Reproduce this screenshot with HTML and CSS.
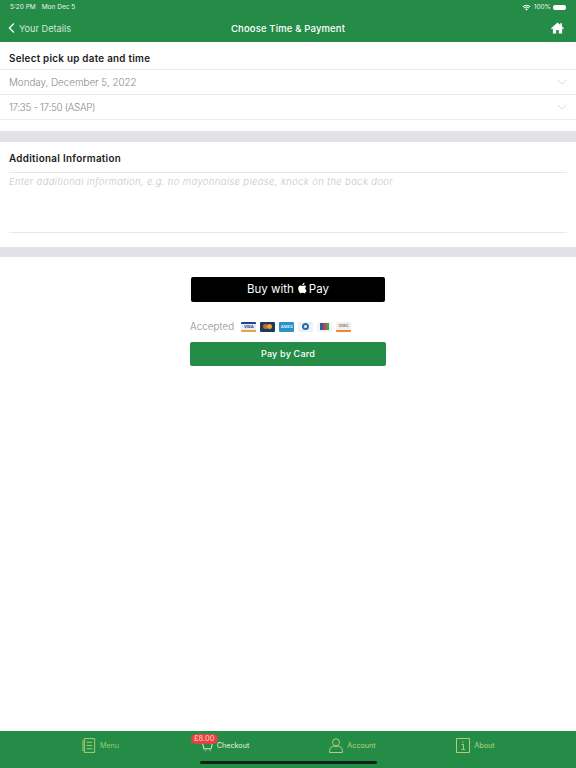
FILE: index.html
```html
<!DOCTYPE html>
<html lang="en">
<head>
  <meta charset="UTF-8">
  <meta name="viewport" content="width=device-width, initial-scale=1.0">
  <title>Choose Time &amp; Payment</title>
  <link rel="stylesheet" href="styles.css">
</head>
<body>
  <div class="page">
    <header>
      <div class="status">
        <div class="status-left"><span>5:20 PM</span><span>Mon Dec 5</span></div>
        <div class="status-right">
          <svg class="wifi" viewBox="0 0 16 12"><path d="M8 11.5 5.6 8.9a3.4 3.4 0 0 1 4.8 0zM4.5 7.8 3.2 6.4a6.8 6.8 0 0 1 9.6 0l-1.3 1.4a5 5 0 0 0-7 0zM2.2 5.4.8 4a10.2 10.2 0 0 1 14.4 0l-1.4 1.4a8.3 8.3 0 0 0-11.6 0z"/></svg>
          <span>100%</span>
          <span class="battery"></span>
        </div>
      </div>
      <nav class="navbar">
        <div class="back">
          <svg viewBox="0 0 9 14"><path d="M7.5 1.2 1.8 7l5.7 5.8"/></svg>
          <span>Your Details</span>
        </div>
        <div class="title">Choose Time &amp; Payment</div>
        <svg class="home" viewBox="0 0 14 13"><path d="M7 .6 0 6.9l.8.9 1.2-1v5.6h3.6V8.6h2.800v3.800H12V6.800l1.200 1 .8-.9-2.200-2V1.400h-1.800v1.900z"/></svg>
      </nav>
    </header>

    <section class="pickup">
      <h3 class="pickup-title">Select pick up date and time</h3>
      <div class="select"><span>Monday, December 5, 2022</span><svg viewBox="0 0 12 7"><path d="M1 1l5 5 5-5"/></svg></div>
      <div class="select"><span class="select-time">17:35 - 17:50 (ASAP)</span><svg viewBox="0 0 12 7"><path d="M1 1l5 5 5-5"/></svg></div>
    </section>
    <div class="band"></div>

    <section class="info">
      <h3 class="info-title">Additional Information</h3>
      <div class="textarea">Enter additional information, e.g. no mayonnaise please, knock on the back door</div>
    </section>
    <div class="band band-2"></div>

    <section class="pay">
      <button class="apple-pay">
        <span>Buy with</span>
        <svg viewBox="0 0 14 17"><path d="M11.600 9c0-1.800 1.500-2.700 1.600-2.700-.9-1.300-2.200-1.500-2.700-1.500-1.100-.1-2.200.7-2.800.7s-1.500-.7-2.400-.7C4 4.800 2.800 5.500 2.200 6.600.9 8.900 1.900 12.200 3.100 14c.6.900 1.300 1.900 2.300 1.800.9 0 1.300-.6 2.400-.6s1.400.6 2.400.6 1.600-.9 2.200-1.800c.7-1 1-2 1-2.100-.1 0-1.800-.7-1.800-2.900zM9.800 3.600c.5-.6.800-1.500.7-2.400-.8 0-1.700.5-2.300 1.200-.5.6-.9 1.500-.8 2.300.9.100 1.800-.4 2.400-1.100z"/></svg>
        <span>Pay</span>
      </button>
      <div class="accepted">
        <span class="accepted-label">Accepted</span>
        <div class="cards">
          <span class="card card-visa">VISA</span>
          <span class="card card-master"><i></i><i></i></span>
          <span class="card card-amex">AMEX</span>
          <span class="card card-diners"><i></i></span>
          <span class="card card-jcb"><i></i><i></i><i></i></span>
          <span class="card card-discover">DISC</span>
        </div>
      </div>
      <button class="pay-card">Pay by Card</button>
    </section>

    <footer class="tabbar">
      <div class="tab tab-dim">
        <svg class="ico-menu" viewBox="0 0 14 16"><path d="M2 .6h11v14.800H2zM.6 2v12M4.500 4.500h6M4.500 8h6M4.500 11.500h6"/></svg>
        <span>Menu</span>
      </div>
      <div class="tab tab-active">
        <span class="badge">£8.00</span>
        <svg class="ico-cart" viewBox="0 0 12 11"><path d="M.5.8h11L10 7.500H2zM3 9.500h.9M8.500 9.500h.9"/></svg>
        <span>Checkout</span>
      </div>
      <div class="tab tab-account">
        <svg class="ico-acc" viewBox="0 0 14 15"><circle cx="7" cy="4.300" r="3.500"/><path d="M.6 14.500v-1.800c0-2.400 1.900-4.400 4.200-4.400h4.400c2.300 0 4.200 2 4.200 4.400v1.800z"/></svg>
        <span>Account</span>
      </div>
      <div class="tab">
        <svg class="ico-about" viewBox="0 0 14 15"><path d="M.5.500h13v14H.5zM6 4h1.500M5.500 6.500h2v5M5.500 11.500h3.500"/></svg>
        <span>About</span>
      </div>
      <div class="home-indicator"></div>
    </footer>
  </div>
</body>
</html>
```

FILE: styles.css
```css
* { margin: 0; padding: 0; box-sizing: border-box; }
body {
  font-family: "Inter", "Liberation Sans", sans-serif;
  background: #fff;
  color: #111;
}
.page {
  width: 576px;
  height: 768px;
  display: flex;
  flex-direction: column;
  overflow: hidden;
}
header {
  background: #258c48;
  color: #fff;
  height: 42px;
  flex-shrink: 0;
}
.status {
  height: 14px;
  padding: 0 10px;
  display: flex;
  justify-content: space-between;
  align-items: center;
  font-size: 6.500px;
  color: #e8f4ec;
}
.status-left { display: flex; gap: 6px; }
.status-right { display: flex; align-items: center; gap: 2px; }
.wifi { width: 9px; height: 7px; fill: #fff; margin-right: 1px; }
.battery {
  width: 13px;
  height: 5px;
  border-radius: 2px;
  background: #fff;
  display: block;
}
.navbar {
  height: 28px;
  padding: 0 12px 0 8px;
  display: flex;
  align-items: center;
  justify-content: space-between;
  position: relative;
}
.back {
  display: flex;
  align-items: center;
  gap: 4px;
  font-size: 9.200px;
  color: #cfe6d6;
}
.back svg {
  width: 7px;
  height: 12px;
  fill: none;
  stroke: #fff;
  stroke-width: 1.600;
}
.title {
  position: absolute;
  left: 0;
  right: 0;
  text-align: center;
  font-size: 9.500px;
  font-weight: 500;
  letter-spacing: 0.150px;
}
.home { width: 13px; height: 12px; fill: #fff; }

.pickup { height: 89px; }
.pickup-title, .info-title {
  font-size: 9.800px;
  font-weight: 600;
  color: #1a1a1a;
  padding-left: 9px;
}
.pickup-title {
  height: 28px;
  line-height: 34px;
  letter-spacing: 0.280px;
  border-bottom: 1px solid #eceaee;
}
.select {
  height: 25px;
  padding: 0 9px;
  display: flex;
  align-items: center;
  justify-content: space-between;
  font-size: 9.800px;
  font-weight: 300;
  color: #8a8a8a;
  border-bottom: 1px solid #eceaee;
}
.select-time { letter-spacing: -0.300px; }
.select svg {
  width: 10px;
  height: 6px;
  fill: none;
  stroke: #d4d2d8;
  stroke-width: 1;
}
.band { height: 11px; background: #e2e1e5; flex-shrink: 0; }
.band-2 { height: 10px; }

.info { height: 105px; padding: 0 9px; }
.info-title {
  height: 31px;
  line-height: 33px;
  padding-left: 0;
  letter-spacing: 0.320px;
  border-bottom: 1px solid #e8e7ea;
}
.textarea {
  height: 60px;
  padding-top: 3px;
  font-size: 9.500px;
  font-style: italic;
  font-weight: 300;
  color: #c6c6ca;
  border-bottom: 1px solid #e8e7ea;
  letter-spacing: 0.350px;
}

.pay {
  flex: 1;
  display: flex;
  flex-direction: column;
  align-items: center;
  padding-top: 20px;
}
button {
  border: none;
  font-family: inherit;
  color: #fff;
}
.apple-pay {
  width: 194px;
  height: 25px;
  background: #000;
  border-radius: 2px;
  display: flex;
  align-items: center;
  justify-content: center;
  font-size: 11.500px;
  gap: 2px;
  padding-bottom: 2px;
}
.apple-pay svg { width: 10px; height: 12px; fill: #fff; margin: -2px 0 0 1px; }
.accepted {
  width: 196px;
  height: 40px;
  display: flex;
  align-items: center;
  padding-top: 9px;
  gap: 7px;
}
.accepted-label { font-size: 9.800px; font-weight: 300; color: #8a8a8a; letter-spacing: 0.100px; }
.cards { display: flex; gap: 4px; align-items: center; }
.card {
  width: 15px;
  height: 10px;
  border-radius: 1px;
  font-size: 4px;
  font-weight: 700;
  text-align: center;
  line-height: 10px;
  overflow: hidden;
  display: flex;
  align-items: center;
  justify-content: center;
}
.card-visa { background: #e9ecf4; color: #27408b; border-top: 2px solid #27408b; border-bottom: 2px solid #e0a63a; }
.card-master { background: #1c3c5c; }
.card-master i { width: 5px; height: 5px; border-radius: 50%; background: #e0602a; display: block; }
.card-master i + i { background: #e9a13a; margin-left: -1px; }
.card-amex { background: #2f8fcb; color: #d7edf8; }
.card-diners { background: #eef2f6; }
.card-diners i { width: 7px; height: 7px; border-radius: 50%; border: 2px solid #2a6ea8; display: block; }
.card-jcb { background: #f4f4f4; }
.card-jcb i { width: 3px; height: 7px; background: #2a5ea8; display: block; }
.card-jcb i:nth-child(2) { background: #c8404a; }
.card-jcb i:nth-child(3) { background: #4f9a4c; }
.card-discover { background: #f3f0ee; color: #8a7f78; border-bottom: 2px solid #e8863a; }
.pay-card {
  width: 196px;
  height: 24px;
  background: #258c48;
  border-radius: 2px;
  font-size: 9px;
  font-weight: 500;
  letter-spacing: 0.200px;
  padding-bottom: 2px;
}

.tabbar {
  height: 37px;
  flex-shrink: 0;
  background: #258c48;
  padding: 0 38px 8px;
  display: grid;
  grid-template-columns: repeat(4, 1fr);
  position: relative;
}
.tab {
  display: flex;
  align-items: center;
  justify-content: center;
  gap: 4px;
  font-size: 7.200px;
  color: #b6d77a;
  position: relative;
}
.tab svg {
  fill: none;
  stroke: #b0d070;
  stroke-width: 1;
}
.tab-dim { color: #9ccb6a; }
.tab-active { color: #e6f3d8; }
.tab-active svg { stroke: #eef6e0; }
.tab-account { padding-left: 4px; }
.ico-menu { width: 14px; height: 15px; }
.ico-cart { width: 11px; height: 10px; margin-top: 3px; }
.ico-acc { width: 14px; height: 15px; }
.ico-about { width: 14px; height: 15px; }
.badge {
  position: absolute;
  top: 3px;
  left: 28px;
  background: #e8413f;
  color: #f6d6cf;
  font-size: 7.500px;
  line-height: 10px;
  padding: 0 3px;
  border-radius: 5px;
}
.home-indicator {
  position: absolute;
  left: 200px;
  bottom: 4px;
  width: 177px;
  height: 3px;
  background: #10261a;
  border-radius: 2px;
}
```
